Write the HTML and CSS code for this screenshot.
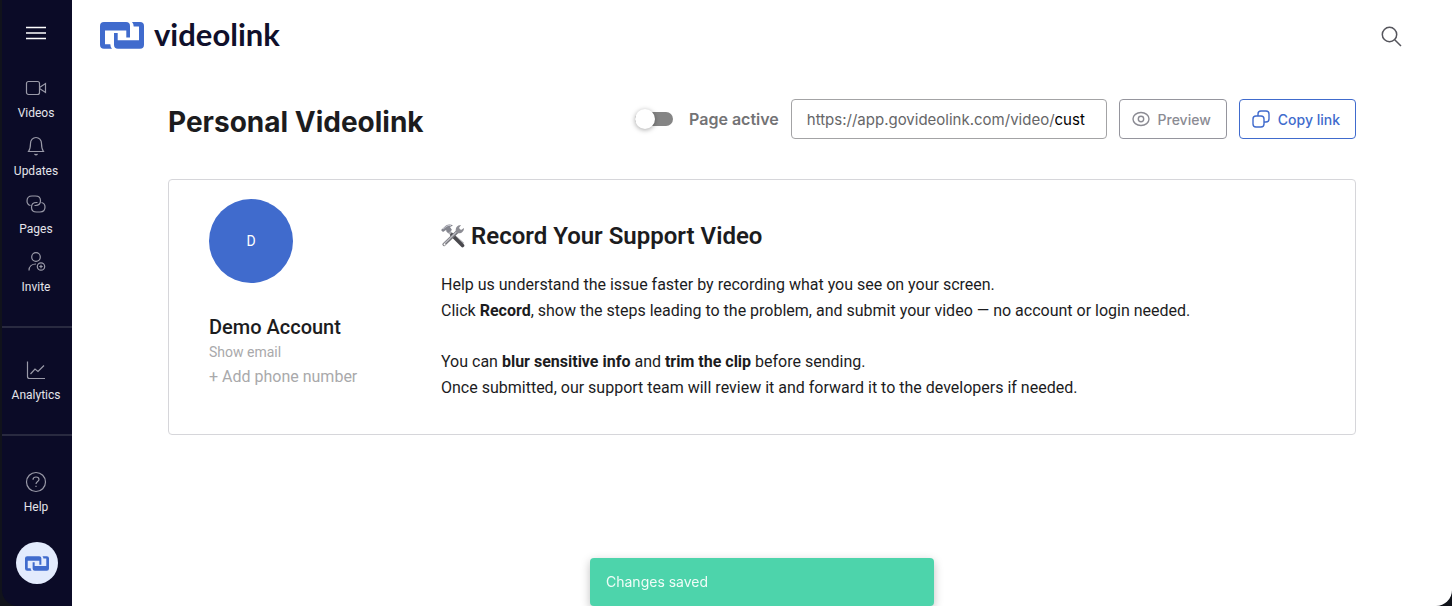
FILE: index.html
```
<!DOCTYPE html>
<html lang="en">
<head>
    <meta charset="UTF-8">
    <meta name="viewport" content="width=device-width, initial-scale=1.0">
    <title>Personal Videolink</title>
    <link rel="stylesheet" href="styles.css">
</head>
<body>
    <svg class="sprite" aria-hidden="true">
        <symbol id="mark" viewBox="0 0 44 27">
            <path d="M4 0H26Q30 0 30 4V15.600H26.300V8.400H5V22.300H10.300Q10.300 25 12 26.700H4Q0 26.700 0 22.700V4Q0 0 4 0Z"/>
            <path transform="rotate(180 22 13.350)" d="M4 0H26Q30 0 30 4V15.600H26.300V8.400H5V22.300H10.300Q10.300 25 12 26.700H4Q0 26.700 0 22.700V4Q0 0 4 0Z"/>
        </symbol>
    </svg>

    <div class="window">
        <nav class="sidebar">
            <button class="menu-btn" aria-label="Menu">
                <svg width="20" height="14" viewBox="0 0 20 14"><path d="M0 1.500H20M0 7H20M0 12.500H20"/></svg>
            </button>

            <div class="nav-group">
                <a href="#" class="nav-item">
                    <svg width="22" height="22" viewBox="0 0 22 22"><rect x="1.500" y="4.500" width="13" height="13" rx="2"/><path d="M14.500 10.500L20.500 6.500V15.500L14.500 11.500"/></svg>
                    Videos
                </a>
                <a href="#" class="nav-item">
                    <svg width="22" height="22" viewBox="0 0 22 22"><path d="M3.500 16.500C5 14.500 5.500 13 5.500 8.500C5.500 5 8 2.500 11 2.500S16.500 5 16.500 8.500C16.500 13 17 14.500 18.500 16.500ZM9.500 19Q11 20.500 12.500 19"/></svg>
                    Updates
                </a>
                <a href="#" class="nav-item">
                    <svg width="22" height="22" viewBox="0 0 22 22"><path d="M5.500 12.500C3.500 12 2 10 2 8C2 5 4 3 7 3H10.500C13.500 3 15.500 5 15.500 7.800S13.500 12.500 10.500 12.500H9.500"/><path d="M16.500 9.500C18.500 10 20 12 20 14C20 17 18 19 15 19H11.500C8.500 19 6.500 17 6.500 14.200S8.500 9.500 11.500 9.500H12.500"/></svg>
                    Pages
                </a>
                <a href="#" class="nav-item">
                    <svg width="22" height="22" viewBox="0 0 22 22"><circle cx="11" cy="6" r="4.300"/><path d="M4 19.500C4 15.500 7 13 11 13"/><circle cx="16" cy="15.500" r="3.700"/><path d="M16 13.800V17.200M14.300 15.500H17.700"/></svg>
                    Invite
                </a>
            </div>

            <div class="nav-group">
                <a href="#" class="nav-item">
                    <svg width="22" height="22" viewBox="0 0 22 22"><path d="M2.500 2.500V17.500Q2.500 19.500 4.500 19.500H20M5.500 15L10 10L13 12.500L19 6.500"/></svg>
                    Analytics
                </a>
            </div>

            <div class="nav-group nav-help">
                <a href="#" class="nav-item">
                    <svg width="22" height="22" viewBox="0 0 22 22"><circle cx="11" cy="11" r="9.500"/><path d="M8 8.800C8 7 9.300 6 11 6S14 7 14 8.600C14 10.500 11 10.700 11 13"/><path d="M11 14.800V16"/></svg>
                    Help
                </a>
            </div>

            <button class="brand-btn" aria-label="Videolink">
                <svg class="mark" width="24" height="15"><use href="#mark"/></svg>
            </button>
        </nav>

        <main class="main">
            <header class="topbar">
                <a href="#" class="logo">
                    <svg class="mark" width="44" height="27"><use href="#mark"/></svg>
                    <span>videolink</span>
                </a>
                <button class="search-btn" aria-label="Search">
                    <svg width="22" height="22" viewBox="0 0 22 22"><circle cx="8.500" cy="8.500" r="7.200"/><path d="M13.700 13.700L20 20"/></svg>
                </button>
            </header>

            <section class="content">
                <div class="page-head">
                    <h1>Personal Videolink</h1>
                    <div class="actions">
                        <label class="switch">
                            <input type="checkbox">
                            <span>Page active</span>
                        </label>
                        <label class="url-field">
                            <span>https://app.govideolink.com/video/</span>
                            <input type="text" value="cust" aria-label="Page link">
                        </label>
                        <button class="btn">
                            <svg width="18" height="18" viewBox="0 0 18 18"><ellipse cx="9" cy="9" rx="8" ry="6.500"/><circle cx="9" cy="9" r="2.700"/></svg>
                            Preview
                        </button>
                        <button class="btn btn-primary">
                            <svg width="18" height="18" viewBox="0 0 18 18"><rect x="1" y="6" width="11" height="11" rx="3"/><path d="M6 6V4Q6 1 9 1H14Q17 1 17 4V9Q17 12 14 12H12"/></svg>
                            Copy link
                        </button>
                    </div>
                </div>

                <div class="card">
                    <div class="profile">
                        <div class="avatar">D</div>
                        <h2>Demo Account</h2>
                        <a href="#" class="email">Show email</a>
                        <a href="#" class="phone">+ Add phone number</a>
                    </div>
                    <div class="message">
                        <h2>
                            <svg width="24" height="24" viewBox="0 0 24 24" aria-hidden="true">
                                <path d="M6 6L22 20" stroke="#aaabb0" stroke-width="3"/>
                                <path d="M11 11L21.500 21.500" stroke="#49484d" stroke-width="3.600" stroke-linecap="round"/>
                                <path d="M3 20.500L17 7" stroke="#77777c" stroke-width="3.200" stroke-linecap="round"/>
                                <path d="M3 20L17 6.500" stroke="#bcbcc3" stroke-width="1.200"/>
                                <path d="M15 8C14 4 16 1 20 1L18 4L20 6L23 4C23 8 20 10 16 9Z" fill="#8d8d94"/>
                                <path d="M0 6L5 1.500C7 0 10 0 12 1.500L9 3L11 6L7 9L5 6L2 8Z" fill="#85868f"/>
                                <path d="M2 5L6 2Q8 1 10 1.500" stroke="#c4c5ce" stroke-width="1" fill="none"/>
                                <circle cx="3.500" cy="20.500" r="1" fill="#fff"/>
                            </svg>
                            Record Your Support Video
                        </h2>
                        <p>Help us understand the issue faster by recording what you see on your screen.<br>
                        Click <strong>Record</strong>, show the steps leading to the problem, and submit your video — no account or login needed.</p>
                        <p>You can <strong>blur sensitive info</strong> and <strong>trim the clip</strong> before sending.<br>
                        Once submitted, our support team will review it and forward it to the developers if needed.</p>
                    </div>
                </div>
            </section>

            <div class="toast" role="status">Changes saved</div>
        </main>
    </div>
</body>
</html>
```

FILE: styles.css
```
:root {
    --navy: #0b0b27;
    --blue: #406bcd;
    --green: #4dd4ab;
    --text: #1c1c1e;
    --muted: #8b8b93;
    --light: #a9a9ab;
}

* {
    box-sizing: border-box;
}

body {
    margin: 0;
    background: #11131b;
    color: var(--text);
    font-family: Roboto, "Liberation Sans", sans-serif;
}

a {
    color: inherit;
    text-decoration: none;
}

button {
    font: inherit;
    background: none;
    border: none;
    padding: 0;
    cursor: pointer;
}

svg {
    display: block;
    flex: none;
}

.sprite {
    position: absolute;
    width: 0;
    height: 0;
}

.mark {
    fill: var(--blue);
}

.window {
    display: flex;
    min-height: 100vh;
    margin-left: 2px;
    border-radius: 0 0 16px 16px;
    overflow: hidden;
}

/* Sidebar */
.sidebar {
    width: 70px;
    flex: none;
    background: var(--navy);
    display: flex;
    flex-direction: column;
    align-items: center;
    padding-top: 26px;
}

.menu-btn {
    padding-right: 2px;
}

.menu-btn svg {
    fill: none;
    stroke: #fff;
    stroke-width: 1.6;
}

.nav-group {
    align-self: stretch;
    padding: 31px 2px 25px 0;
    border-bottom: 2px solid #292a40;
}

.menu-btn + .nav-group {
    padding-top: 37px;
}

.nav-group.nav-help {
    border: none;
    padding: 35px 2px 21px 0;
}

.nav-item {
    display: flex;
    flex-direction: column;
    align-items: center;
    gap: 6px;
    height: 58px;
    color: #e4e4ea;
    font-size: 12px;
    line-height: 16px;
}

.nav-item:last-child {
    height: 50px;
}

.nav-item svg {
    fill: none;
    stroke: #9a9aa8;
    stroke-width: 1.2;
}

.brand-btn {
    width: 42px;
    height: 42px;
    border-radius: 50%;
    background: #e3ebfd;
    display: flex;
    align-items: center;
    justify-content: center;
}

/* Main area */
.main {
    flex: 1;
    background: #fff;
}

.topbar {
    display: flex;
    justify-content: space-between;
    align-items: center;
    height: 71px;
    padding: 0 49px 0 28px;
}

.logo {
    display: flex;
    align-items: flex-start;
    gap: 10px;
    color: #10102b;
    font-family: Lato, sans-serif;
    font-size: 31px;
    font-weight: 700;
    line-height: 24px;
}

.search-btn {
    padding-top: 2px;
}

.search-btn svg {
    fill: none;
    stroke: #55555c;
    stroke-width: 1.5;
}

.content {
    padding: 28px 96px;
}

.page-head {
    display: flex;
    justify-content: space-between;
    align-items: flex-start;
    margin-bottom: 34px;
}

h1 {
    margin: 0;
    font-family: Inter, sans-serif;
    font-size: 28px;
    font-weight: 700;
    line-height: 46px;
}

.actions {
    display: flex;
    gap: 12px;
    font-family: Inter, sans-serif;
}

.switch {
    display: flex;
    align-items: center;
    gap: 16px;
    color: #737375;
    font-size: 16px;
    font-weight: 600;
}

.switch input {
    appearance: none;
    display: flex;
    align-items: center;
    width: 38px;
    height: 14px;
    margin: 0;
    border-radius: 7px;
    background: #858585;
}

.switch input::before {
    content: "";
    width: 20px;
    height: 20px;
    border-radius: 50%;
    background: #fff;
    box-shadow: 0 1px 5px rgba(0, 0, 0, 0.35);
}

.switch input:checked {
    justify-content: flex-end;
    background: var(--blue);
}

.url-field {
    display: flex;
    align-items: center;
    height: 40px;
    padding: 0 15px;
    border: 1px solid #a3a3a5;
    border-radius: 4px;
    color: #666668;
    font-size: 15px;
}

.url-field input {
    width: 36px;
    padding: 0;
    border: none;
    outline: none;
    background: none;
    color: #000;
    font: inherit;
}

.btn {
    display: flex;
    align-items: center;
    gap: 8px;
    height: 40px;
    padding: 0 15px 0 12px;
    border: 1px solid #95959d;
    border-radius: 4px;
    color: var(--muted);
    font-size: 14px;
    font-weight: 500;
}

.btn svg {
    fill: none;
    stroke: currentColor;
    stroke-width: 1.4;
}

.btn-primary {
    color: var(--blue);
    border-color: var(--blue);
}

/* Card */
.card {
    display: flex;
    min-height: 256px;
    padding: 19px 40px;
    border: 1px solid #d6d6da;
    border-radius: 4px;
}

.profile {
    display: flex;
    flex-direction: column;
    align-items: flex-start;
    width: 232px;
    flex: none;
    color: var(--light);
}

.avatar {
    display: flex;
    align-items: center;
    justify-content: center;
    width: 84px;
    height: 84px;
    margin-bottom: 32px;
    border-radius: 50%;
    background: var(--blue);
    color: #fff;
    font-size: 14px;
}

.profile h2 {
    margin: 0;
    color: var(--text);
    font-size: 20px;
    font-weight: 500;
    line-height: 24px;
}

.email {
    font-size: 14px;
    line-height: 26px;
}

.phone {
    font-size: 16px;
    line-height: 24px;
}

.message {
    padding-top: 21px;
}

.message h2 {
    display: flex;
    align-items: center;
    gap: 6px;
    margin: 0 0 20px;
    font-size: 24px;
    font-weight: 600;
    line-height: 32px;
}

.message p {
    margin: 0 0 25px;
    font-size: 16px;
    line-height: 26px;
}

.message p:last-child {
    margin-bottom: 0;
}

/* Toast */
.toast {
    position: fixed;
    bottom: 0;
    left: calc(50% + 36px);
    transform: translateX(-50%);
    width: 344px;
    padding: 14px 16px;
    border-radius: 4px;
    background: var(--green);
    box-shadow: 0 3px 10px rgba(0, 0, 0, 0.25);
    color: #effcf7;
    font-family: Inter, sans-serif;
    font-size: 14px;
    line-height: 20px;
}
```
